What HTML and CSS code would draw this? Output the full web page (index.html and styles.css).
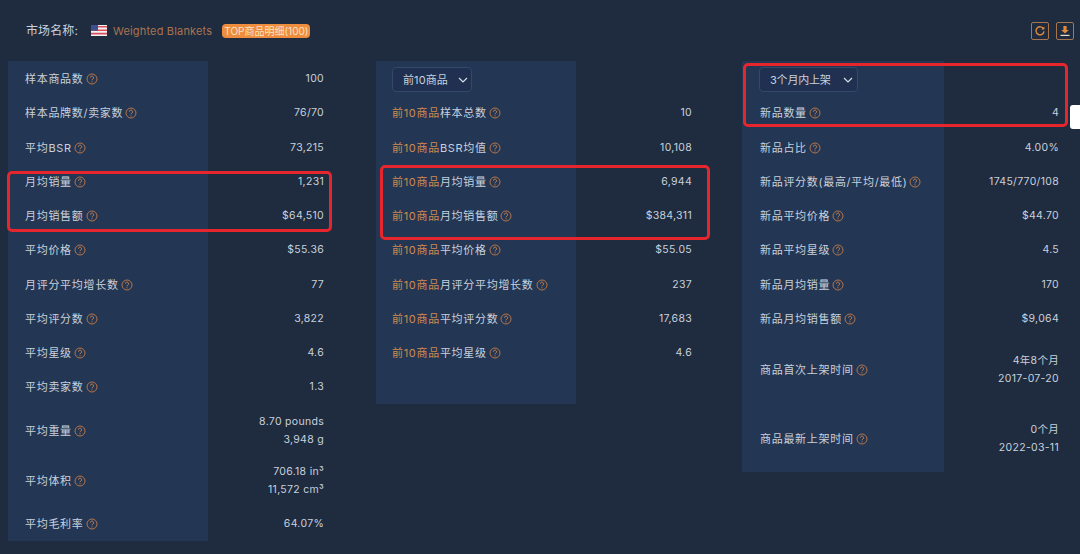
FILE: index.html
```html
<!DOCTYPE html>
<html lang="zh">
<head>
<meta charset="utf-8">
<title>市场名称</title>
<link rel="stylesheet" href="styles.css">
</head>
<body>
<svg class="defs" width="0" height="0" aria-hidden="true"><defs>
<symbol id="q" viewBox="0 0 12 12"><circle cx="6" cy="6" r="5" fill="none" stroke="#b5754a" stroke-width="1"/><path d="M4.4 4.7a1.6 1.6 0 1 1 2.5 1.3c-.6.4-.9.7-.9 1.3" fill="none" stroke="#c8824f" stroke-width="1"/><circle cx="6" cy="8.8" r=".6" fill="#c8824f"/></symbol>
<symbol id="chev" viewBox="0 0 10 6"><path d="M1 1l4 4 4-4" fill="none" stroke="#d5dce6" stroke-width="1.2"/></symbol>
</defs></svg>
<header class="top">
  <span class="market-label">市场名称:</span>
  <svg class="flag" viewBox="0 0 16 11"><rect width="16" height="11" fill="#f2f2f2"/><path d="M0 1h16v1.6H0zM0 4.4h16V6H0zM0 7.8h16v1.6H0z" fill="#d8505c"/><rect width="7" height="5.6" fill="#3d4f8f"/></svg>
  <span class="market-name">Weighted Blankets</span>
  <span class="tag">TOP商品明细(100)</span>
  <span class="tools">
    <span class="tool"><svg viewBox="0 0 12 12"><path d="M9.6 4A4 4 0 1 0 10 6.4" fill="none" stroke="#e08a3c" stroke-width="1.4"/><path d="M10.4 1.4v3.2H7.2z" fill="#e08a3c"/></svg></span>
    <span class="tool"><svg viewBox="0 0 12 12"><path d="M4.4 1h3.2v4h2.2L6 8.6 2.2 5h2.2z" fill="#e08a3c"/><path d="M1.5 10.4h9" stroke="#e8dcc8" stroke-width="1.2"/></svg></span>
  </span>
</header>
<main class="columns">
  <section class="col">
    <div class="row"><div class="k">样本商品数<svg class="q"><use href="#q"/></svg></div><div class="v">100</div></div>
    <div class="row"><div class="k">样本品牌数/卖家数<svg class="q"><use href="#q"/></svg></div><div class="v">76/70</div></div>
    <div class="row"><div class="k">平均BSR<svg class="q"><use href="#q"/></svg></div><div class="v">73,215</div></div>
    <div class="row"><div class="k">月均销量<svg class="q"><use href="#q"/></svg></div><div class="v">1,231</div></div>
    <div class="row"><div class="k">月均销售额<svg class="q"><use href="#q"/></svg></div><div class="v">$64,510</div></div>
    <div class="row"><div class="k">平均价格<svg class="q"><use href="#q"/></svg></div><div class="v">$55.36</div></div>
    <div class="row"><div class="k">月评分平均增长数<svg class="q"><use href="#q"/></svg></div><div class="v">77</div></div>
    <div class="row"><div class="k">平均评分数<svg class="q"><use href="#q"/></svg></div><div class="v">3,822</div></div>
    <div class="row"><div class="k">平均星级<svg class="q"><use href="#q"/></svg></div><div class="v">4.6</div></div>
    <div class="row"><div class="k">平均卖家数<svg class="q"><use href="#q"/></svg></div><div class="v">1.3</div></div>
    <div class="row tall"><div class="k">平均重量<svg class="q"><use href="#q"/></svg></div><div class="v">8.70 pounds<br>3,948 g</div></div>
    <div class="row tall2"><div class="k">平均体积<svg class="q"><use href="#q"/></svg></div><div class="v">706.18 in³<br>11,572 cm³</div></div>
    <div class="row last"><div class="k">平均毛利率<svg class="q"><use href="#q"/></svg></div><div class="v">64.07%</div></div>
    <div class="mark mark-a"></div>
  </section>
  <section class="col col-b">
    <div class="row"><div class="k"><span class="select select-b">前10商品<svg class="chev"><use href="#chev"/></svg></span></div><div class="v"></div></div>
    <div class="row"><div class="k"><em>前10商品</em>样本总数<svg class="q"><use href="#q"/></svg></div><div class="v">10</div></div>
    <div class="row"><div class="k"><em>前10商品</em>BSR均值<svg class="q"><use href="#q"/></svg></div><div class="v">10,108</div></div>
    <div class="row"><div class="k"><em>前10商品</em>月均销量<svg class="q"><use href="#q"/></svg></div><div class="v">6,944</div></div>
    <div class="row"><div class="k"><em>前10商品</em>月均销售额<svg class="q"><use href="#q"/></svg></div><div class="v">$384,311</div></div>
    <div class="row"><div class="k"><em>前10商品</em>平均价格<svg class="q"><use href="#q"/></svg></div><div class="v">$55.05</div></div>
    <div class="row"><div class="k"><em>前10商品</em>月评分平均增长数<svg class="q"><use href="#q"/></svg></div><div class="v">237</div></div>
    <div class="row"><div class="k"><em>前10商品</em>平均评分数<svg class="q"><use href="#q"/></svg></div><div class="v">17,683</div></div>
    <div class="row"><div class="k"><em>前10商品</em>平均星级<svg class="q"><use href="#q"/></svg></div><div class="v">4.6</div></div>
    <div class="row"><div class="k"></div><div class="v"></div></div>
    <div class="mark mark-b"></div>
  </section>
  <section class="col col-c">
    <div class="row"><div class="k"><span class="select select-c">3个月内上架<svg class="chev"><use href="#chev"/></svg></span></div><div class="v"></div></div>
    <div class="row"><div class="k">新品数量<svg class="q"><use href="#q"/></svg></div><div class="v">4</div></div>
    <div class="row"><div class="k">新品占比<svg class="q"><use href="#q"/></svg></div><div class="v">4.00%</div></div>
    <div class="row"><div class="k">新品评分数(最高/平均/最低)<svg class="q"><use href="#q"/></svg></div><div class="v">1745/770/108</div></div>
    <div class="row"><div class="k">新品平均价格<svg class="q"><use href="#q"/></svg></div><div class="v">$44.70</div></div>
    <div class="row"><div class="k">新品平均星级<svg class="q"><use href="#q"/></svg></div><div class="v">4.5</div></div>
    <div class="row"><div class="k">新品月均销量<svg class="q"><use href="#q"/></svg></div><div class="v">170</div></div>
    <div class="row"><div class="k">新品月均销售额<svg class="q"><use href="#q"/></svg></div><div class="v">$9,064</div></div>
    <div class="row date"><div class="k">商品首次上架时间<svg class="q"><use href="#q"/></svg></div><div class="v">4年8个月<br>2017-07-20</div></div>
    <div class="row date"><div class="k">商品最新上架时间<svg class="q"><use href="#q"/></svg></div><div class="v">0个月<br>2022-03-11</div></div>
    <div class="mark mark-c"></div>
    <div class="edge-tab"></div>
  </section>
</main>
</body>
</html>
```

FILE: styles.css
```css
* { box-sizing: border-box; }
html, body { margin: 0; height: 100%; }
body {
  width: 1080px;
  height: 554px;
  overflow: hidden;
  background: #1f2b3f;
  color: #c8d1dd;
  font: 11px/18px "Inter", "Noto Sans CJK SC", sans-serif;
  letter-spacing: .2px;
}
.defs { position: absolute; }
.top {
  height: 61px;
  padding: 0 6px 0 26px;
  display: flex;
  align-items: center;
}
.market-label { font-size: 12px; letter-spacing: .1px; margin-right: 13px; }
.flag { width: 16px; height: 11px; margin-right: 6px; }
.market-name { color: #a9744f; letter-spacing: .17px; margin-right: 10px; }
.tag {
  background: #ee8d3e;
  color: #f9e2c8;
  border-radius: 4px;
  height: 14px;
  line-height: 14px;
  padding: 0 2px;
  font-size: 10px;
  letter-spacing: 0;
}
.tools { margin-left: auto; display: flex; gap: 7px; }
.tool {
  width: 18px;
  height: 18px;
  border: 1px solid #a8764e;
  border-radius: 2px;
  display: flex;
  align-items: center;
  justify-content: center;
}
.tool svg { width: 12px; height: 12px; }
.columns { display: flex; padding-left: 8px; gap: 36px; }
.col { position: relative; width: 332px; }
.col-c { margin-left: -2px; width: 333px; }
.row {
  display: grid;
  grid-template-columns: 200px 1fr;
  height: 34.25px;
}
.col-c .row { grid-template-columns: 202px 1fr; }
.row.tall { height: 52px; }
.row.tall2 { height: 49px; }
.row.last { height: 36px; }
.row.date { height: 68.5px; }
.k {
  background: #233653;
  padding: 2px 0 0 17px;
  display: flex;
  align-items: center;
  white-space: nowrap;
  letter-spacing: .7px;
}
.col-b .k { padding-left: 16px; }
.col-c .k { padding-left: 18px; }
.v {
  padding: 2px 16px 0 0;
  text-align: right;
  align-self: center;
  font-size: 10.5px;
  letter-spacing: .3px;
}
.k em { font-style: normal; color: #cf8a50; }
.q { width: 12px; height: 12px; margin-left: 2px; flex: none; }
.select {
  display: inline-flex;
  align-items: center;
  justify-content: space-between;
  height: 25px;
  border: 1px solid #34486a;
  border-radius: 4px;
  background: #1f3050;
  letter-spacing: .1px;
}
.select-b { width: 80px; padding: 0 3px 0 10px; margin-top: 1px; }
.select-c { width: 99px; padding: 0 4px 0 10px; margin-top: 1px; margin-left: -1px; letter-spacing: -.2px; }
.chev { width: 10px; height: 6px; }
.mark {
  position: absolute;
  border: 3px solid #e6262c;
  border-radius: 5px;
  pointer-events: none;
}
.mark-a { left: -1px; top: 110px; width: 325px; height: 61px; }
.mark-b { left: 4px; top: 104px; width: 330px; height: 75px; }
.mark-c { left: 1px; top: 2px; width: 325px; height: 64px; }
.edge-tab {
  position: absolute;
  left: 328px;
  top: 44px;
  width: 12px;
  height: 24px;
  background: #fff;
  border-radius: 3px 0 0 3px;
}
```
